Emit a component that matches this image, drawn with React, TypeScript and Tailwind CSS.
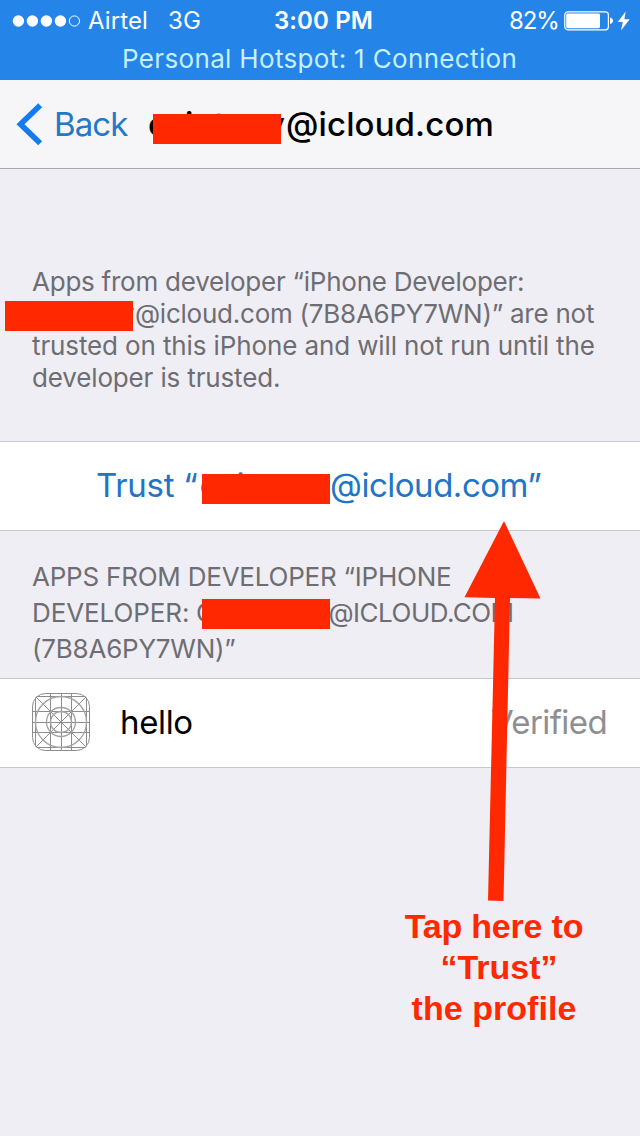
import React from "react";

function Redaction({ className }: { className: string }) {
  return <span aria-hidden className={`absolute h-[30px] w-[128px] bg-[#ff2800] ${className}`} />;
}

function Battery() {
  return (
    <svg width="50" height="20" viewBox="0 0 50 20" fill="none">
      <rect x="0.8" y="0.8" width="43.6" height="18" rx="3" stroke="#fff" strokeWidth="1.2" />
      <rect x="2.2" y="2.4" width="33.8" height="14.8" rx="1.4" fill="#fff" />
      <path d="M46 6.6c2 .5 3 1.6 3 3.2s-1 2.700-3 3.200z" fill="#fff" />
    </svg>
  );
}

function StatusBar() {
  return (
    <header className="flex h-20 flex-col bg-[#2484e8] text-white">
      <div className="flex h-10 items-center pl-3 pt-px text-[24px] leading-[40px]">
        <svg width="70" height="14" viewBox="0 0 70 14" fill="#fff">
          <circle cx="6.400" cy="7" r="5.700" />
          <circle cx="20.400" cy="7" r="5.700" />
          <circle cx="34.400" cy="7" r="5.700" />
          <circle cx="48.400" cy="7" r="5.700" />
          <circle cx="62.400" cy="7" r="5.100" fill="none" stroke="#fff" strokeWidth="1" />
        </svg>
        <span className="ml-[6px] w-[80px] tracking-[0.1px]">Airtel</span>
        <span className="w-[106px] tracking-[0.1px]">3G</span>
        <span className="w-[235px] font-semibold tracking-[0.100px]">3:00 PM</span>
        <span className="w-[55px] tracking-[-1.100px]">82%</span>
        <Battery />
        <svg className="ml-[3px]" width="14" height="20" viewBox="0 0 14 20" fill="#fff">
          <path d="M8.600 0.500 0.800 11h5L4 19.500 12.700 8.300H7.400z" />
        </svg>
      </div>
      <p className="pl-[122px] text-[26px] leading-[37px] tracking-[0.340px] text-[#c6f0ff]">
        Personal Hotspot: 1 Connection
      </p>
    </header>
  );
}

function NavBar() {
  return (
    <nav className="relative flex h-[89px] items-center border-b border-[#a9a8ae] bg-[#f6f6f9] pl-4 text-[33px]">
      <svg width="27" height="44" viewBox="0 0 27 44" fill="none">
        <path d="M24.200 3.200 4.500 22.300 24.200 41.300" stroke="#147bee" strokeWidth="5.600" />
      </svg>
      <span className="ml-[11px] w-[94px] pt-[2px] tracking-[-0.900px] text-[#2478c9]">Back</span>
      <span className="flex w-[138px] pt-[2px] font-medium text-black">
        <span className="w-[37px]">c</span>
        <span className="w-[29px]">i</span>
        <span className="w-[52px]">t</span>
        <span>y</span>
      </span>
      <span className="pt-[2px] font-medium tracking-[0.120px] text-black">@icloud.com</span>
      <Redaction className="left-[153px] top-[34px]" />
    </nav>
  );
}

function Description() {
  return (
    <section className="relative h-[272px] whitespace-nowrap pl-8 pt-[97px] text-[26px] leading-8 text-[#6d6d72]">
      <p className="tracking-[-0.240px]">Apps from developer “iPhone Developer:</p>
      <p className="flex">
        <span className="w-[103px] pl-[88px]">y</span>
        <span className="tracking-[-0.240px]">@icloud.com (7B8A6PY7WN)” are not</span>
      </p>
      <p className="tracking-[-0.120px]">trusted on this iPhone and will not run until the</p>
      <p className="tracking-[-0.150px]">developer is trusted.</p>
      <Redaction className="left-[5px] top-[132px]" />
    </section>
  );
}

function TrustRow() {
  return (
    <button className="relative flex h-[90px] w-full items-center whitespace-nowrap border-y border-[#c8c7cc] bg-white pb-px pl-[96px] text-left text-[33px] text-[#2275c4]">
      <span className="w-[103.500px] tracking-[-0.280px]">Trust “</span>
      <span className="flex w-[130.500px]">
        <span className="w-[37px]">c</span>
        <span>i</span>
      </span>
      <span className="tracking-[-0.480px]">@icloud.com”</span>
      <Redaction className="left-[202px] top-[32px]" />
    </button>
  );
}

function SectionHeader() {
  return (
    <h2 className="relative h-[147px] whitespace-nowrap pl-8 pt-[28px] text-[26px] leading-9 text-[#6d6d72]">
      <span className="block tracking-[-0.220px]">APPS FROM DEVELOPER “IPHONE</span>
      <span className="flex">
        <span className="w-[164px] tracking-[-0.090px]">DEVELOPER:</span>
        <span className="w-[132.500px]">C</span>
        <span className="tracking-[-0.500px]">@ICLOUD.COM</span>
      </span>
      <span className="block tracking-[-0.220px]">(7B8A6PY7WN)”</span>
      <Redaction className="left-[202px] top-[68px]" />
    </h2>
  );
}

function AppIcon() {
  const lines = [3.5, 18.5, 29.5, 39.5, 54.5];
  return (
    <svg className="mb-[3px]" width="58" height="58" viewBox="0 0 58 58" fill="none" stroke="#8c8c8c" strokeWidth="1">
      <clipPath id="icon-shape">
        <rect width="58" height="58" rx="13.500" />
      </clipPath>
      <rect x="0.500" y="0.500" width="57" height="57" rx="13" />
      <g clipPath="url(#icon-shape)">
        {lines.map((p) => (
          <path key={p} d={`M${p} 0v58M0 ${p}h58`} />
        ))}
        <path d="M3 3l52 52M55 3L3 55" />
      </g>
      <g stroke="#a2a2a2" strokeWidth="1.300">
        <circle cx="29" cy="29" r="25.500" />
        <circle cx="29" cy="29" r="14.500" />
        <circle cx="29" cy="29" r="10.500" />
      </g>
    </svg>
  );
}

function AppRow() {
  return (
    <div className="flex h-[90px] items-center border-y border-[#c8c7cc] bg-white pl-8 pr-[33px] text-[33px]">
      <AppIcon />
      <span className="ml-[30px] pb-px tracking-[-0.350px] text-black">hello</span>
      <span className="ml-auto pb-px tracking-[-0.600px] text-[#8e8e93]">Verified</span>
    </div>
  );
}

function Callout() {
  return (
    <>
      <svg className="absolute left-[464px] top-[521px]" width="77" height="380" viewBox="0 0 77 380" fill="#ff2800">
        <path d="M40 0 76.500 77.500 46 77 39.500 380 24 379.500 31 77 0.500 76.300z" />
      </svg>
      <p className="absolute left-[394px] top-[906px] w-[200px] text-center font-['Liberation_Sans',sans-serif] text-[34px] font-bold leading-[41px] text-[#ff2800]">
        <span className="block tracking-[-0.200px]">Tap here to</span>
        <span className="block pl-[10px]">“Trust”</span>
        <span className="block tracking-[0.050px]">the profile</span>
      </p>
    </>
  );
}

export default function App() {
  return (
    <div className="relative h-[1136px] w-[640px] overflow-hidden bg-[#efeef4] font-['Inter',sans-serif]">
      <StatusBar />
      <NavBar />
      <Description />
      <TrustRow />
      <SectionHeader />
      <AppRow />
      <Callout />
    </div>
  );
}
